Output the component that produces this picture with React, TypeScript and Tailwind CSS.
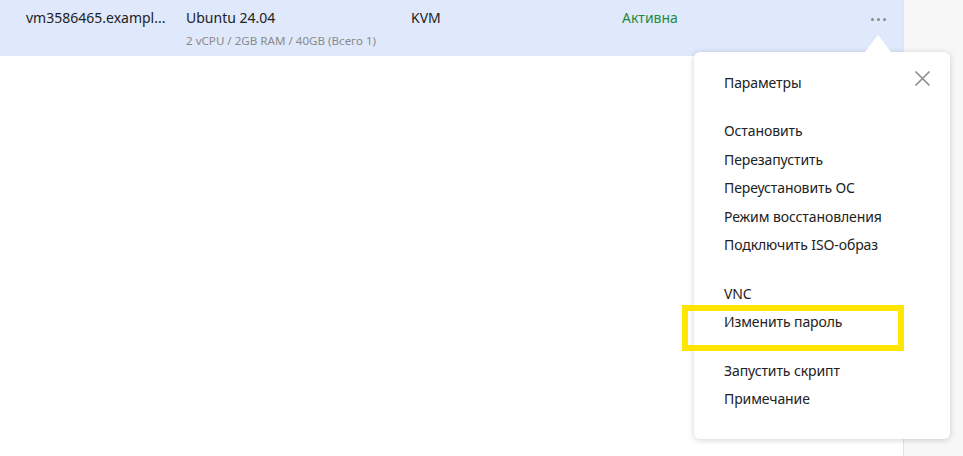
import React from 'react';

const groups: string[][] = [
  ['Параметры'],
  ['Остановить', 'Перезапустить', 'Переустановить ОС', 'Режим восстановления', 'Подключить ISO-образ'],
  ['VNC', 'Изменить пароль'],
  ['Запустить скрипт', 'Примечание'],
];

function ActionMenu() {
  return (
    <div className="absolute left-[694px] top-[52px] w-[256px] rounded-md bg-white pl-[30px] pt-4 pb-[26px] shadow-[0_1px_6px_rgba(0,0,0,0.18)]">
      <div className="absolute -top-[17px] left-[171px] h-0 w-0 border-x-[13px] border-b-[17px] border-x-transparent border-b-white" />
      <button type="button" className="absolute right-[19px] top-[18px] text-[#8c8c8c]">
        <svg width="17" height="17" viewBox="0 0 17 17" fill="none" stroke="currentColor" strokeWidth="1.6">
          <path d="M1.5 1.5l14 14M15.5 1.5l-14 14" />
        </svg>
      </button>
      <div className="flex flex-col gap-5">
        {groups.map((group, i) => (
          <ul key={i} className="flex flex-col">
            {group.map((item) => (
              <li key={item} className="flex h-[28.5px] items-center text-[14px] tracking-[-0.1px] text-[#222]">
                {item}
              </li>
            ))}
          </ul>
        ))}
      </div>
    </div>
  );
}

export default function App() {
  return (
    <div className="relative flex h-[456px] w-full overflow-hidden bg-white font-['Noto_Sans',sans-serif]">
      <div className="flex-1">
        <div className="flex h-14 items-start bg-[#dfe9fb] pt-2 text-[14px] text-[#222]">
          <div className="w-[186px] shrink-0 whitespace-nowrap pl-[26px] leading-5">vm3586465.exampl...</div>
          <div className="flex w-[225px] shrink-0 flex-col">
            <span className="leading-5">Ubuntu 24.04</span>
            <span className="mt-[5px] whitespace-nowrap text-[11.6px] leading-4 text-[#8a8a8a]">2 vCPU / 2GB RAM / 40GB (Всего 1)</span>
          </div>
          <div className="w-[211px] shrink-0 leading-5">KVM</div>
          <div className="w-[249px] shrink-0 leading-5 text-[#1f8a3b]">Активна</div>
          <div className="flex h-5 items-center gap-[3px] pt-[3px]">
            <span className="h-[3px] w-[3px] rounded-full bg-[#8c8c8c]" />
            <span className="h-[3px] w-[3px] rounded-full bg-[#8c8c8c]" />
            <span className="h-[3px] w-[3px] rounded-full bg-[#8c8c8c]" />
          </div>
        </div>
      </div>
      <div className="w-[60px] border-l border-[#e4e4e4] bg-[#f7f7f7]" />
      <ActionMenu />
      <div className="pointer-events-none absolute left-[682px] top-[305px] h-[46px] w-[222px] border-[6px] border-[#ffe500]" />
    </div>
  );
}
